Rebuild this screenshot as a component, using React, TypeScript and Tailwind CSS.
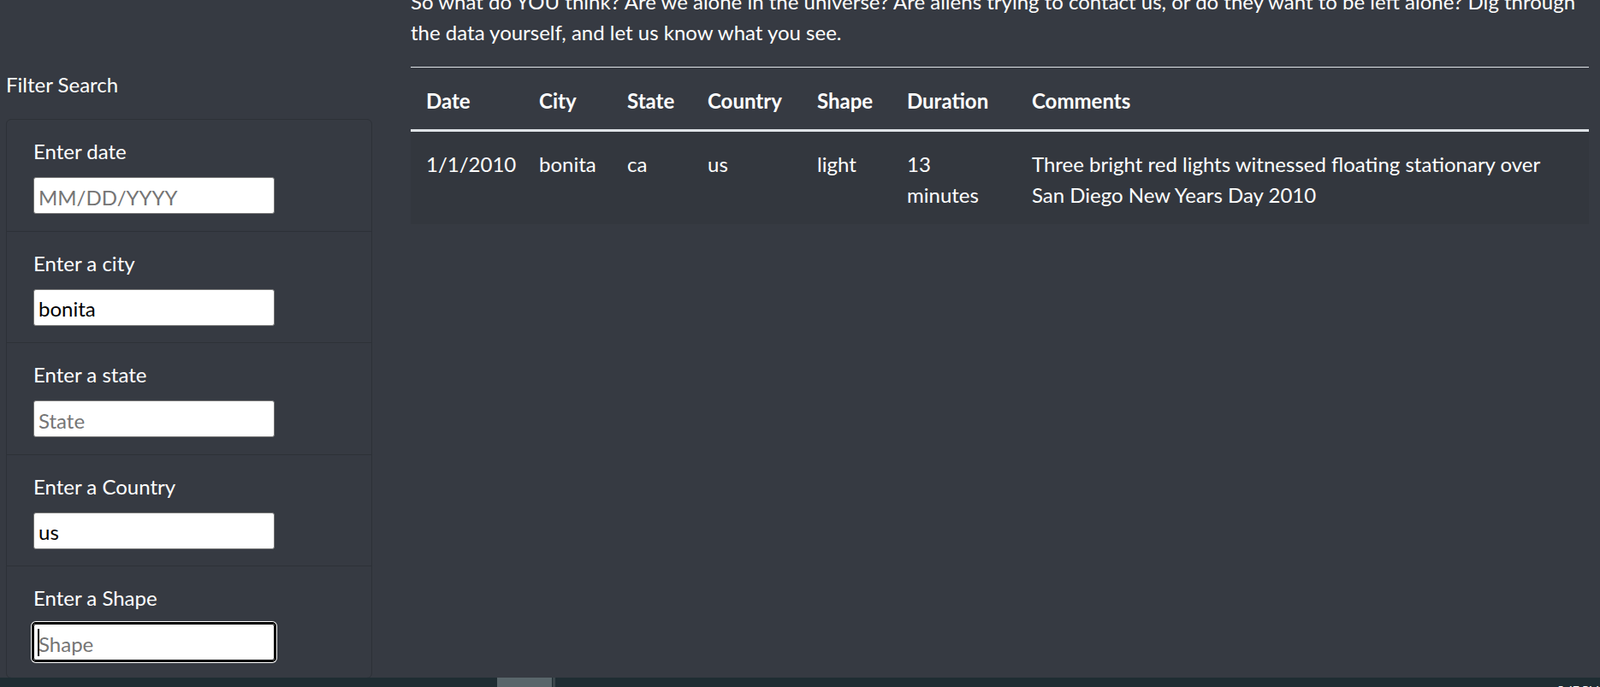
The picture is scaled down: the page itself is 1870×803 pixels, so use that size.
import React from "react";

interface FilterField {
  label: string;
  placeholder: string;
  value: string;
  focused?: boolean;
}

const fields: FilterField[] = [
  { label: "Enter date", placeholder: "MM/DD/YYYY", value: "" },
  { label: "Enter a city", placeholder: "City", value: "bonita" },
  { label: "Enter a state", placeholder: "State", value: "" },
  { label: "Enter a Country", placeholder: "Country", value: "us" },
  { label: "Enter a Shape", placeholder: "Shape", value: "", focused: true },
];

const columns = [
  { name: "Date", width: "w-[132px]" },
  { name: "City", width: "w-[103px]" },
  { name: "State", width: "w-[94px]" },
  { name: "Country", width: "w-[128px]" },
  { name: "Shape", width: "w-[105px]" },
  { name: "Duration", width: "w-[146px]" },
  { name: "Comments", width: "" },
];

function FilterInput({ field }: { field: FilterField }) {
  if (field.focused) {
    return (
      <div className="relative h-[43px] w-[282px]">
        <input
          type="text"
          placeholder={field.placeholder}
          defaultValue={field.value}
          className="h-full w-full rounded-[3px] border border-black bg-white pl-[5px] pt-[3px] text-[24px] text-black outline-2 outline-black shadow-[0_0_0_3px_white] placeholder:text-[#757575]"
        />
        <span className="absolute left-[5px] top-[6px] h-[32px] w-[2px] bg-black" />
      </div>
    );
  }
  return (
    <input
      type="text"
      placeholder={field.placeholder}
      defaultValue={field.value}
      className="h-[43px] w-[282px] rounded-[3px] border border-[#767676] bg-white pl-[5px] pt-[3px] text-[24px] text-black outline-none placeholder:text-[#757575]"
    />
  );
}

function Sidebar() {
  return (
    <aside className="w-[428px] shrink-0 pt-[81px]">
      <h5 className="mb-[22px] text-[24px] leading-[36px] text-white">Filter Search</h5>
      <ul className="overflow-hidden rounded-[6px] border border-[#2d3137]">
        {fields.map((field) => (
          <li
            key={field.label}
            className="border-b border-[#2d3137] px-[31px] pb-[19.5px] pt-[18px] last:border-b-0"
          >
            <label className="mb-[13px] block pt-[1px] text-[24px] leading-[35px] text-white">
              {field.label}
            </label>
            <FilterInput field={field} />
          </li>
        ))}
      </ul>
    </aside>
  );
}

function SightingsTable() {
  return (
    <table className="w-full table-fixed border-collapse text-left text-[24px] leading-[36px] text-white">
      <thead>
        <tr>
          {columns.map((col) => (
            <th
              key={col.name}
              className={`${col.width} border-b-[3px] border-t border-[#dee2e6] px-[18px] pb-[15px] pt-[21px] font-bold`}
            >
              {col.name}
            </th>
          ))}
        </tr>
      </thead>
      <tbody>
        <tr className="bg-black/5">
          <td className="px-[18px] pb-[16px] pt-[20px] align-top">1/1/2010</td>
          <td className="px-[18px] pb-[16px] pt-[20px] align-top">bonita</td>
          <td className="px-[18px] pb-[16px] pt-[20px] align-top">ca</td>
          <td className="px-[18px] pb-[16px] pt-[20px] align-top">us</td>
          <td className="px-[18px] pb-[16px] pt-[20px] align-top">light</td>
          <td className="px-[18px] pb-[16px] pt-[20px] align-top">
            13
            <br />
            minutes
          </td>
          <td className="px-[18px] pb-[16px] pt-[20px] align-top">
            Three bright red lights witnessed floating stationary over
            <br />
            San Diego New Years Day 2010
          </td>
        </tr>
      </tbody>
    </table>
  );
}

export default function App() {
  return (
    <div className="flex h-screen w-full flex-col overflow-hidden bg-[#363a42] font-['Lato',sans-serif]">
      <div className="flex min-h-0 flex-1 overflow-hidden pl-[7px]">
        <Sidebar />
        <main className="ml-[45px] w-[1377px] shrink-0">
          <p className="-mt-[16px] mb-[22px] whitespace-nowrap text-[24px] leading-[36px] text-white">
            So what do YOU think? Are we alone in the universe? Are aliens trying to contact us, or do they want to be left alone? Dig through
            <br />
            the data yourself, and let us know what you see.
          </p>
          <SightingsTable />
        </main>
      </div>
      <div className="flex h-[11px] shrink-0 bg-[#1f2d33]">
        <div className="ml-[581px] h-full w-[64px] bg-[#59666b]" />
        <div className="ml-[1px] h-full w-[3px] bg-[#3b464b]" />
        <div className="ml-auto w-[50px] overflow-hidden whitespace-nowrap pt-[9px] text-[13px] leading-none text-white">
          5:47 PM
        </div>
      </div>
    </div>
  );
}
